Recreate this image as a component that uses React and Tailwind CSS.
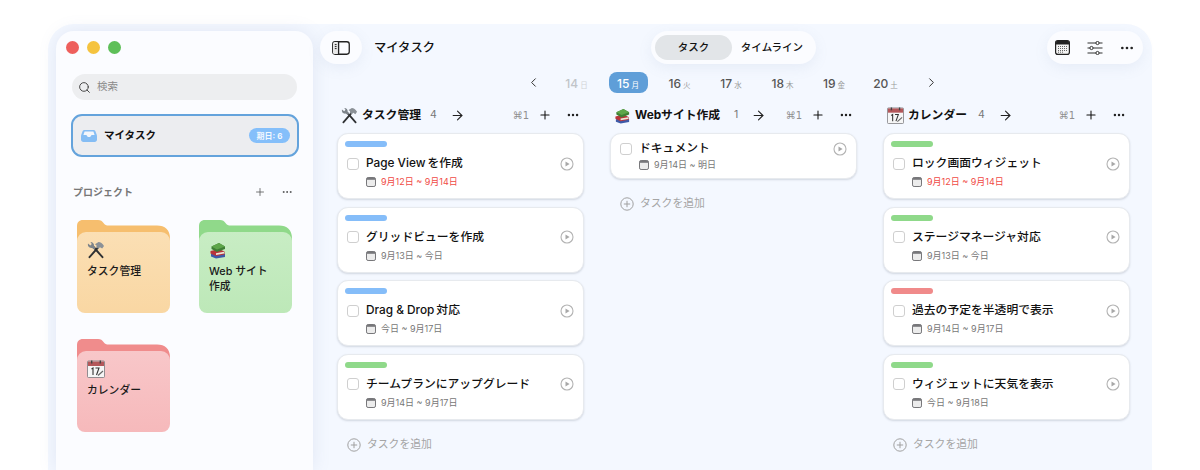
import { ArrowRight, ChevronLeft, ChevronRight, Ellipsis, Plus, Search } from 'lucide-react'

const COLUMNS = [
  {
    name: 'タスク管理',
    icon: 'tools',
    count: 4,
    titleWidth: 'w-[68px]',
    tasks: [
      { title: 'Page View\u2009を作成', date: '9月12日 ~ 9月14日', color: 'bg-[#85bdf9]', overdue: true },
      { title: 'グリッドビューを作成', date: '9月13日 ~ 今日', color: 'bg-[#85bdf9]' },
      { title: 'Drag & Drop\u2009対応', date: '今日 ~ 9月17日', color: 'bg-[#85bdf9]' },
      { title: 'チームプランにアップグレード', date: '9月14日 ~ 9月17日', color: 'bg-[#8fd98a]' }
    ]
  },
  {
    name: 'Webサイト作成',
    icon: 'books',
    count: 1,
    titleWidth: 'w-[99px]',
    tasks: [{ title: 'ドキュメント', date: '9月14日 ~ 明日' }]
  },
  {
    name: 'カレンダー',
    icon: 'calendar',
    count: 4,
    titleWidth: 'w-[70px]',
    tasks: [
      { title: 'ロック画面ウィジェット', date: '9月12日 ~ 9月14日', color: 'bg-[#8fd98a]', overdue: true },
      { title: 'ステージマネージャ対応', date: '9月13日 ~ 今日', color: 'bg-[#8fd98a]' },
      { title: '過去の予定を半透明で表示', date: '9月14日 ~ 9月17日', color: 'bg-[#f08a8a]' },
      { title: 'ウィジェットに天気を表示', date: '今日 ~ 9月18日', color: 'bg-[#8fd98a]' }
    ]
  }
]

const DAYS = [
  { d: '14', w: '日', faded: true },
  { d: '15', w: '月', active: true },
  { d: '16', w: '火' },
  { d: '17', w: '水' },
  { d: '18', w: '木' },
  { d: '19', w: '金' },
  { d: '20', w: '土' }
]

/* ========== Drawn icons ========== */
function ToolsIcon({ size = 18 }) {
  return (
    <svg width={size} height={size} viewBox="0 0 18 18" fill="none">
      <path d="M15.5 16.2 L6.5 6" stroke="#2f3133" strokeWidth="1.9" strokeLinecap="round" />
      <path d="M2.5 16.2 L11 6.5" stroke="#2f3133" strokeWidth="1.9" strokeLinecap="round" />
      <path d="M8 3.2 L11.5 1 C13.5 1 15.5 2.6 17 5 L15.2 7.6 L13 6.2 L11.2 7.8 L9.4 6 L9.6 4.6 Z" fill="#8b9197" />
      <path d="M1 2.6 C0.4 5 2 7.4 5 7 L7.4 8.6 L8.6 6.8 L7 5 C7.4 2.8 5.8 1 3.4 1 L4.8 3 L3.4 4.6 Z" fill="#7d848a" />
    </svg>
  )
}

function BooksIcon({ size = 18 }) {
  return (
    <svg width={size} height={size} viewBox="0 0 18 18" fill="none">
      <path d="M2 13 L11 11 L16 13 L16 16 L7 17.5 L2 15.5 Z" fill="#3e5aa8" />
      <path d="M1.5 10 L10 8 L15.5 10.5 L15.5 13.5 L7 15 L1.5 12.5 Z" fill="#b9343a" />
      <path d="M7 12.2 L15 10.8 L15 12.6 L7 14 Z" fill="#ece6d8" />
      <path d="M2.5 5.5 L10 2 L16 5.5 L16 8 L8 11 L2.5 8 Z" fill="#3f7f35" />
      <path d="M2.5 5.5 L10 2 L16 5.5 L8 8.5 Z" fill="#5ea64a" />
    </svg>
  )
}

function CalendarEmoji({ size = 18 }) {
  return (
    <svg width={size} height={size} viewBox="0 0 18 18" fill="none">
      <rect x="0.5" y="1" width="17" height="16.5" rx="1" fill="#f6f6f6" stroke="#77777c" strokeWidth="0.8" />
      <rect x="1" y="1.5" width="16" height="4.5" fill="#b4575a" />
      <rect x="4" y="0.5" width="1.4" height="3" fill="#444" />
      <rect x="12.6" y="0.5" width="1.4" height="3" fill="#444" />
      <path d="M4.5 9 L6 8 V15 M8.5 8 H12 L9.5 15" stroke="#333" strokeWidth="1.1" />
      <path d="M11 15.5 L16 11" stroke="#666" strokeWidth="1.2" />
    </svg>
  )
}

function Emoji({ type, size }) {
  if (type === 'tools') return <ToolsIcon size={size} />
  if (type === 'books') return <BooksIcon size={size} />
  return <CalendarEmoji size={size} />
}

function SmallCalendar() {
  return (
    <svg width="10" height="10" viewBox="0 0 10 10" fill="none" className="shrink-0">
      <rect x="0.5" y="0.5" width="9" height="9" rx="1.6" fill="#ececec" stroke="#77777a" />
      <rect x="1" y="1" width="8" height="1.8" fill="#77777a" />
    </svg>
  )
}

function PlayCircle() {
  return (
    <svg width="14" height="14" viewBox="0 0 14 14" fill="none" className="shrink-0">
      <circle cx="7" cy="7" r="6" stroke="#b3b3b3" strokeWidth="1.1" />
      <path d="M5.5 4.4 L9.6 7 L5.5 9.6 Z" fill="#a8a8a8" />
    </svg>
  )
}

function SidebarIcon() {
  return (
    <svg width="18" height="14" viewBox="0 0 18 14" fill="none">
      <rect x="0.75" y="0.75" width="16.5" height="12.5" rx="2.4" stroke="#222" strokeWidth="1.3" />
      <rect x="1" y="1" width="5.5" height="12" rx="1.5" fill="#e8e8e8" />
      <path d="M6.6 1 V13" stroke="#222" strokeWidth="1.3" />
      <path d="M2.8 3.6 H4.6 M2.8 5.6 H4.6 M2.8 7.6 H4.6" stroke="#222" strokeWidth="1" />
    </svg>
  )
}

function CalendarGridIcon() {
  return (
    <svg width="15" height="15" viewBox="0 0 15 15" fill="none">
      <rect x="0.6" y="0.6" width="13.8" height="13.8" rx="2.2" fill="#f4f4f4" stroke="#222" strokeWidth="1.2" />
      <path d="M1 2.6 C1 1.6 1.6 1 2.6 1 H12.4 C13.4 1 14 1.6 14 2.6 V4.4 H1 Z" fill="#222" />
      <path d="M3 6.5 H12 M3 8.5 H12 M3 10.5 H12 M3 12.2 H9" stroke="#666" strokeWidth="1" strokeDasharray="1 1" />
    </svg>
  )
}

function FiltersIcon() {
  return (
    <svg width="16" height="14" viewBox="0 0 16 14" fill="none">
      <path d="M0.5 2 H15.5 M0.5 7 H15.5 M0.5 12 H15.5" stroke="#333" strokeWidth="1.1" />
      <circle cx="10.5" cy="2" r="1.6" fill="#fff" stroke="#333" />
      <circle cx="4.5" cy="7" r="1.6" fill="#fff" stroke="#333" />
      <circle cx="10.5" cy="12" r="1.6" fill="#fff" stroke="#333" />
    </svg>
  )
}

function InboxIcon() {
  return (
    <svg width="16" height="12" viewBox="0 0 16 12" fill="none">
      <path d="M3.4 0 H12.6 C13.4 0 14 0.4 14.3 1.1 L16 5.4 V9.5 C16 11 15 12 13.6 12 H2.4 C1 12 0 11 0 9.5 V5.4 L1.7 1.1 C2 0.4 2.6 0 3.4 0 Z" fill="#85bdf4" />
      <path d="M3.6 1.6 H12.4 L13.6 5 H10.4 C10.2 6.4 9.2 7 8 7 C6.8 7 5.8 6.4 5.6 5 H2.4 Z" fill="#f3f6fb" />
    </svg>
  )
}

function FolderBack({ color }) {
  return (
    <svg width="93" height="30" viewBox="0 0 93 30" className="block">
      <path
        d="M0 6 C0 2.5 2 0 6 0 H21 C24 0 25 1 26.5 3 C28 5 29 5.5 32 5.5 H80 C88 5.5 93 10 93 18 V30 H0 Z"
        fill={color}
      />
    </svg>
  )
}

/* ========== Sidebar ========== */
function Folder({ name, icon, back, front }) {
  return (
    <div className="relative h-[93px] w-[93px]">
      <FolderBack color={back} />
      <div className={`absolute inset-x-0 bottom-0 top-[12px] rounded-b-[8px] rounded-t-[9px] pl-[10px] pt-[9px] ${front}`}>
        <Emoji type={icon} size={18} />
        <div className="mt-[5px] text-[10.8px] font-medium leading-[15px] text-[#1a1a1a]">{name}</div>
      </div>
    </div>
  )
}

function Sidebar() {
  return (
    <aside className="mt-[7px] flex w-[257px] shrink-0 flex-col rounded-t-[18px] bg-[#fbfcff] px-[15px] shadow-[0_0_18px_rgba(110,130,175,0.14)]">
      <div className="mt-[10px] flex h-[12px] gap-[8px]">
        <span className="-ml-[5px] h-[13px] w-[13px] rounded-full bg-[#ee5f5c]" />
        <span className="h-[13px] w-[13px] rounded-full bg-[#f5c33f]" />
        <span className="h-[13px] w-[13px] rounded-full bg-[#5ebf58]" />
      </div>
      <div className="ml-px mt-[21px] flex h-[26px] w-[225px] items-center gap-[6px] rounded-full bg-[#edeef0] pl-[6px]">
        <Search size={13} strokeWidth={1.8} className="text-[#444]" />
        <span className="text-[10.5px] text-[#8a8a8a]">検索</span>
      </div>
      <div className="mt-[14px] flex h-[43px] w-[228px] items-center rounded-[11px] border-[2px] border-[#64a3dc] bg-[#ecedf0] pl-[8px] pr-[7px]">
        <InboxIcon />
        <span className="ml-[7px] flex-1 text-[10.5px] font-bold text-[#111]">マイタスク</span>
        <span className="flex h-[15px] w-[41px] items-center justify-center rounded-full bg-[#85bffa] text-[8px] font-bold text-[#f3f8ff]">
          期日: 6
        </span>
      </div>
      <div className="ml-[2px] mt-[28px] flex h-[14px] items-center text-[#777]">
        <span className="flex-1 text-[10px] font-bold">プロジェクト</span>
        <Plus size={12} strokeWidth={1.6} className="mr-[15px] text-[#555]" />
        <Ellipsis size={12} strokeWidth={2} className="mr-[5px] text-[#555]" />
      </div>
      <div className="ml-[6px] mt-[21px] grid grid-cols-[93px_93px] gap-x-[29px] gap-y-[26px]">
        <Folder name="タスク管理" icon="tools" back="#f6be6e" front="bg-gradient-to-b from-[#fbdfb4] to-[#f9d7a3]" />
        <Folder name={<>Web サイト<br />作成</>} icon="books" back="#90d98a" front="bg-gradient-to-b from-[#c8edc4] to-[#bde8b8]" />
        <Folder name="カレンダー" icon="calendar" back="#f08c8c" front="bg-gradient-to-b from-[#f8c7c9] to-[#f6b9bb]" />
      </div>
    </aside>
  )
}

/* ========== Board ========== */
function TopBar() {
  return (
    <div className="flex items-center">
      <button className="flex h-[33px] w-[42px] items-center justify-center rounded-full bg-[#fbfcff] shadow-[0_4px_14px_rgba(120,140,180,0.1)]">
        <SidebarIcon />
      </button>
      <span className="ml-[12px] w-[277px] pt-[2px] text-[12.3px] font-medium text-[#111]">マイタスク</span>
      <div className="flex h-[33px] w-[165px] items-center rounded-full bg-[#fbfcff] px-[4px] text-[10.5px] font-medium text-[#111] shadow-[0_4px_14px_rgba(120,140,180,0.1)]">
        <span className="flex h-[25px] w-[77px] items-center justify-center rounded-full bg-[#e2e5e8]">タスク</span>
        <span className="flex-1 text-center">タイムライン</span>
      </div>
      <div className="ml-auto mr-[9px] flex h-[33px] w-[96px] items-center rounded-full bg-[#fbfcff] pl-[8px] shadow-[0_4px_14px_rgba(120,140,180,0.1)]">
        <CalendarGridIcon />
        <span className="ml-[17px]"><FiltersIcon /></span>
        <Ellipsis size={16} strokeWidth={2} className="ml-[16px] text-[#222]" />
      </div>
    </div>
  )
}

function DayStrip() {
  return (
    <div className="mt-[8px] flex h-[21px] items-center pl-[206px]">
      <ChevronLeft size={15} strokeWidth={1.6} className="mr-[16px] text-[#333]" />
      {DAYS.map((day) => (
        <div
          key={day.d}
          className={`mr-[12.5px] flex h-[21px] w-[39px] items-baseline justify-center gap-[2px] rounded-[8px] pt-[4px] ${day.active ? 'bg-[#5f9ed8]' : ''}`}
        >
          <span
            className={`text-[12px] font-medium leading-[15px] ${day.active ? 'text-white' : day.faded ? 'text-[#c0c4c8]' : 'text-[#555]'}`}
          >
            {day.d}
          </span>
          <span className={`text-[7.5px] ${day.active ? 'text-white' : day.faded ? 'text-[#d0d3d6]' : 'text-[#999]'}`}>
            {day.w}
          </span>
        </div>
      ))}
      <ChevronRight size={15} strokeWidth={1.6} className="ml-[6px] text-[#333]" />
    </div>
  )
}

function TaskCard({ task }) {
  return (
    <div className="flex w-[247px] flex-col rounded-[11px] border border-[#e7eaee] bg-white pl-[7px] pr-[9px] shadow-[0_1px_2px_rgba(90,100,120,0.22)]">
      {task.color && <div className={`mt-[7px] h-[6px] w-[42px] rounded-full ${task.color}`} />}
      <div className={`flex items-center ${task.color ? 'mt-[8px]' : 'mt-[6px]'}`}>
        <span className="ml-[2px] h-[12px] w-[12px] shrink-0 rounded-[3px] border border-[#cfcfcf]" />
        <span className="ml-[7px] flex-1 whitespace-nowrap text-[11.8px] font-medium leading-[17px] text-[#111]">
          {task.title}
        </span>
        <PlayCircle />
      </div>
      <div className={`ml-[21px] flex items-center gap-[5px] ${task.color ? 'mb-[10px] mt-[4px]' : 'mb-[7px] mt-[2px]'}`}>
        <SmallCalendar />
        <span className={`text-[9px] leading-[12px] ${task.overdue ? 'text-[#f04a45]' : 'text-[#777]'}`}>{task.date}</span>
      </div>
    </div>
  )
}

function Column({ column }) {
  return (
    <div className="flex w-[247px] flex-col">
      <div className="flex h-[22px] items-center pl-[4px] pr-[4px]">
        <Emoji type={column.icon} size={17} />
        <span className={`ml-[4px] whitespace-nowrap pt-[2px] text-[11.8px] font-bold text-[#111] ${column.titleWidth}`}>{column.name}</span>
        <span className="text-[10.5px] text-[#777]">{column.count}</span>
        <ArrowRight size={15} strokeWidth={1.7} className="ml-[13px] text-[#222]" />
        <span className="ml-auto font-['DejaVu_Sans',sans-serif] text-[10px] text-[#8f8f8f]">⌘1</span>
        <Plus size={14} strokeWidth={1.8} className="ml-[9px] text-[#111]" />
        <Ellipsis size={14} strokeWidth={2.2} className="ml-[14px] text-[#222]" />
      </div>
      <div className="mt-[7px] flex flex-col gap-[7.6px]">
        {column.tasks.map((t) => (
          <TaskCard key={t.title} task={t} />
        ))}
      </div>
      <div className="ml-[10px] mt-[17px] flex items-center gap-[6px] text-[#a5a5a5]">
        <svg width="14" height="14" viewBox="0 0 14 14" fill="none">
          <circle cx="7" cy="7" r="6.2" stroke="#a0a0a0" strokeWidth="1" />
          <path d="M7 3.8 V10.2 M3.8 7 H10.2" stroke="#a0a0a0" strokeWidth="1" />
        </svg>
        <span className="text-[10.8px]">タスクを追加</span>
      </div>
    </div>
  )
}

export default function App() {
  return (
    <div className="h-[470px] overflow-hidden bg-white pl-[48px] pr-[48px] pt-[24px] font-['Inter','Noto_Sans_CJK_JP',sans-serif]">
      <div className="flex h-[446px] rounded-t-[26px] bg-[#f4f8ff] pl-[8px]">
        <Sidebar />
        <main className="min-w-0 flex-1 pl-[7px] pt-[7px]">
          <TopBar />
          <DayStrip />
          <div className="ml-[17px] mt-[11px] flex gap-[26px]">
            {COLUMNS.map((c) => (
              <Column key={c.name} column={c} />
            ))}
          </div>
        </main>
      </div>
    </div>
  )
}
